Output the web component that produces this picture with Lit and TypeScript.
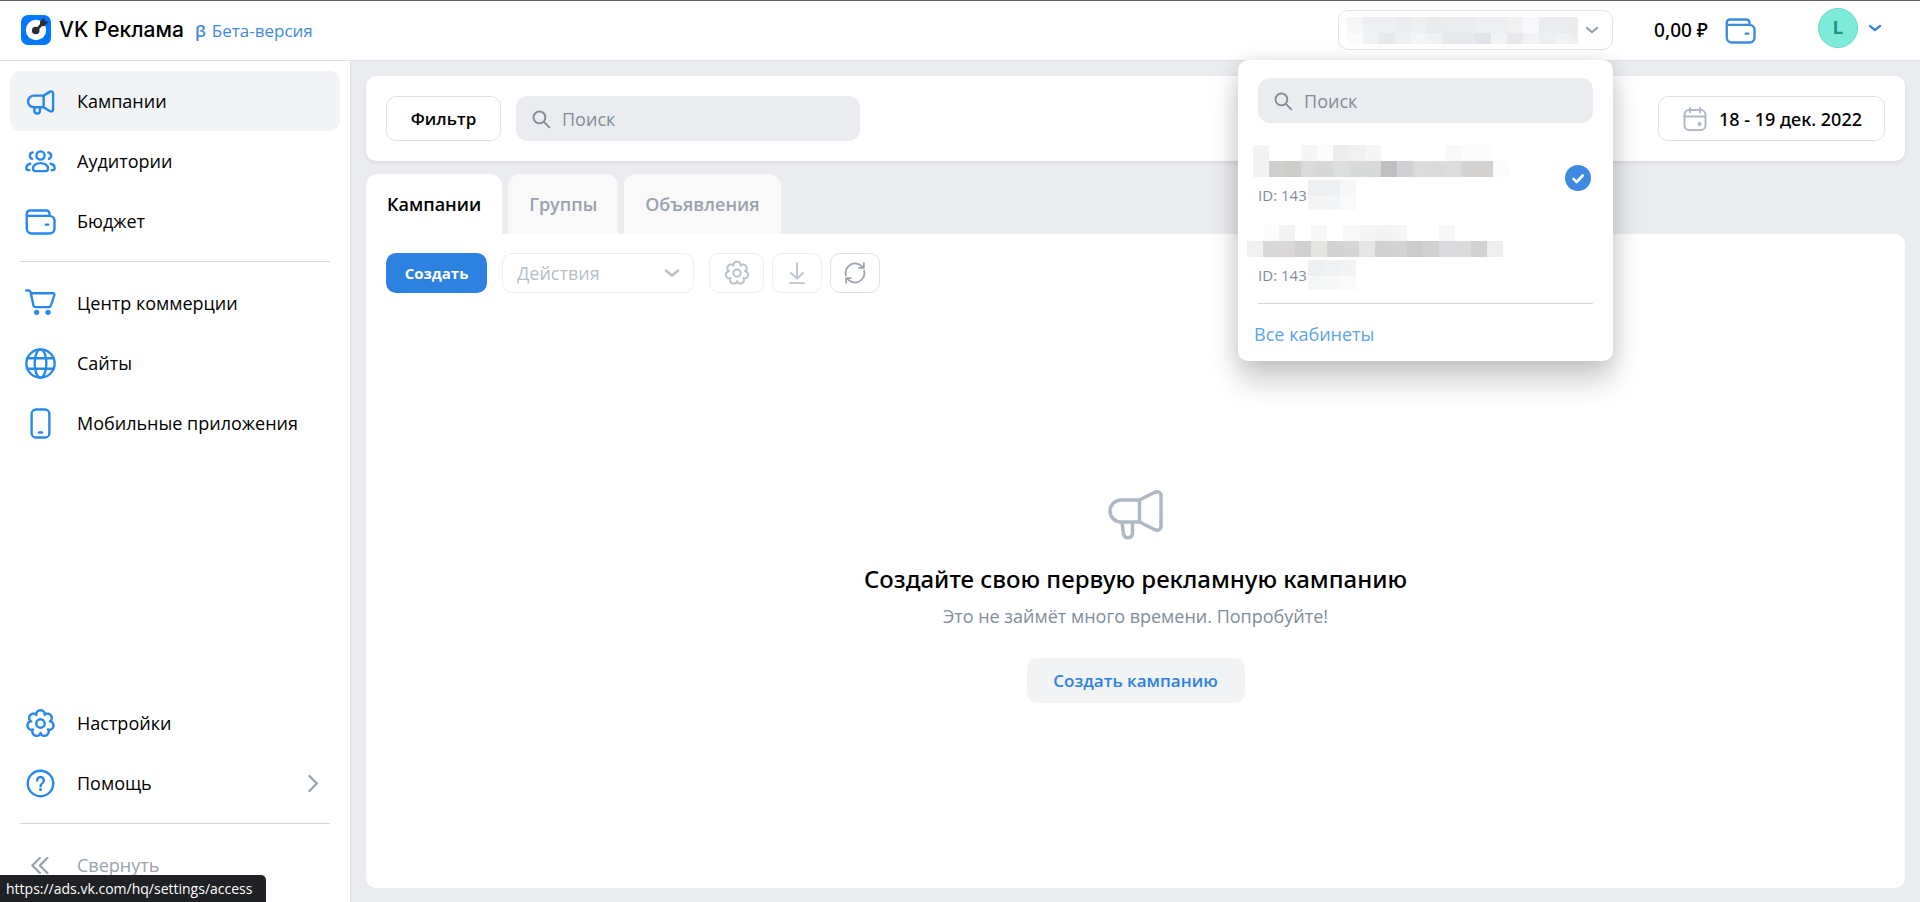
import { LitElement, html, css, svg, nothing } from "lit";
import { customElement, property } from "lit/decorators.js";
import { styleMap } from "lit/directives/style-map.js";

/** Seven-lobed gear outline centred on (14, 14). */
function gearPath(inner: number, depth: number): string {
  const steps = 140;
  const points: string[] = [];
  for (let i = 0; i < steps; i++) {
    const a = (i / steps) * Math.PI * 2;
    const r = inner + depth * Math.pow(Math.abs(Math.cos(3.5 * a)), 0.6);
    points.push(`${(14 + r * Math.sin(a)).toFixed(2)} ${(14 - r * Math.cos(a)).toFixed(2)}`);
  }
  return `M${points.join("L")}Z`;
}

const GEAR = gearPath(7.6, 3);

const ICONS: Record<string, unknown> = {
  megaphone: svg`<path d="M16.5 9.3H8.7a4.65 4.65 0 0 0 0 9.3h7.8zM16.5 9.3l5.2-3.2A1.6 1.6 0 0 1 24.1 7.5v12.9a1.6 1.6 0 0 1-2.4 1.4l-5.2-3.2M9.1 18.6v2.7a2.25 2.25 0 0 0 4.5 0v-2.7"/>`,
  users: svg`<circle cx="14" cy="9.2" r="3.3"/><path d="M8 19.6c0-2.600 2.800-4.300 6-4.300s6 1.700 6 4.300c0 1.300-.7 2.100-1.900 2.100H9.900C8.700 21.700 8 20.900 8 19.600zM7.700 6.700a2.700 2.700 0 0 0-.4 5.200M20.300 6.700a2.700 2.700 0 0 1 .4 5.200M5.900 15.800C4 16.200 2.700 17.500 2.700 19.200c0 1 .6 1.700 1.600 1.700h.8M22.100 15.800c1.900.4 3.200 1.700 3.200 3.400 0 1-.6 1.700-1.600 1.700h-.8"/>`,
  wallet: svg`<path d="M3 9.500V7.700a2.500 2.500 0 0 1 2.500-2.500h13.200a2.500 2.500 0 0 1 2.500 2.500v1.800M3 9.500h18.200a4 4 0 0 1 4 4v6.100a4 4 0 0 1-4 4H7a4 4 0 0 1-4-4zM18.200 16.500h2"/>`,
  cart: svg`<path d="M2.700 3.600h1.700a1.800 1.800 0 0 1 1.700 1.400l2.200 10.300a2 2 0 0 0 2 1.600h10.200a2 2 0 0 0 1.900-1.500l2.700-8.200a1.100 1.100 0 0 0-1.100-1.400H6.400"/><g fill="currentColor" stroke="none"><circle cx="10.900" cy="21" r="2.100"/><circle cx="20" cy="21" r="2.100"/></g>`,
  globe: svg`<circle cx="14" cy="14" r="11.300"/><ellipse cx="14" cy="14" rx="4.700" ry="11.300"/><path d="M3.500 9.800h21M3.500 18.200h21"/>`,
  phone: svg`<rect x="6.900" y="2.800" width="14.200" height="22.400" rx="3.500"/><path d="M12.800 21.200h2.400"/>`,
  gear: svg`<path d=${GEAR}/><circle cx="14" cy="14" r="3.400"/>`,
  help: svg`<circle cx="14" cy="14" r="10.200"/><path d="M11.300 11.600a2.700 2.700 0 1 1 4.300 2.100c-1 .7-1.600 1.300-1.600 2.500"/><circle cx="14" cy="18.700" r="1.200" fill="currentColor" stroke="none"/>`,
  collapse: svg`<path d="M13.500 8l-6 6 6 6M19.500 8l-6 6 6 6"/>`,
  chevronRight: svg`<path d="M11.500 8l6 6-6 6"/>`,
  chevronDown: svg`<path d="M8 11.500l6 5 6-5"/>`,
  search: svg`<circle cx="12" cy="12" r="7.500"/><path d="M17.600 17.600l7 7"/>`,
  calendar: svg`<rect x="3.500" y="5" width="21" height="20" rx="4.500"/><path d="M3.500 11.500h21M9 3v4.500M19 3v4.500"/><circle cx="18.500" cy="19" r="2" fill="currentColor" stroke="none"/>`,
  download: svg`<path d="M14 3.500v16M7.500 14l6.500 6 6.500-6M6.500 25h15"/>`,
  refresh: svg`<path d="M4.100 16.500A10.200 10.200 0 0 1 22.600 8.500M23.900 11.500A10.200 10.200 0 0 1 5.400 19.500M23.500 3.500v5h-5M4.500 24.500v-5h5"/>`,
};

@customElement("ui-icon")
export class UiIcon extends LitElement {
  static styles = css`
    :host { display: block; flex: none; width: 35px; height: 35px; }
    .icon { display: block; width: 100%; height: 100%; }
  `;
  @property() name = "";
  @property({ type: Number }) weight = 1.9;
  render() {
    return html`<svg class="icon" viewBox="0 0 28 28" fill="none" stroke="currentColor" stroke-width=${this.weight}
      stroke-linecap="round" stroke-linejoin="round" aria-hidden="true">${ICONS[this.name] ?? nothing}</svg>`;
  }
}

/** Pixelated mask in place of a private value: rows of 16px cells. */
@customElement("pixel-mask")
export class PixelMask extends LitElement {
  static styles = css`
    :host { display: block; }
    .row { display: flex; }
    .cell { width: 16px; flex: none; }
  `;
  @property({ attribute: false }) rows: string[] = [];
  @property({ attribute: false }) heights: number[] = [];
  render() {
    return this.rows.map((row, i) => html`<div class="row">${row.split(" ").map((c) => html`<span class="cell"
      style=${styleMap({ height: `${this.heights[i] ?? 16}px`, background: c === "-" ? "transparent" : `#${c}` })}></span>`)}</div>`);
  }
}

const NAV_MAIN = [
  { icon: "megaphone", label: "Кампании", active: true },
  { icon: "users", label: "Аудитории" },
  { icon: "wallet", label: "Бюджет" },
];
const NAV_ASSETS = [
  { icon: "cart", label: "Центр коммерции" },
  { icon: "globe", label: "Сайты" },
  { icon: "phone", label: "Мобильные приложения" },
];
const NAV_SERVICE = [
  { icon: "gear", label: "Настройки" },
  { icon: "help", label: "Помощь", more: true },
];

const CURRENT_MASK = [
  "f5f6f8 eeeff2 eeeff2 ecedef eeeff1 eaebed ebecee ecedf1 eeeff1 eeeff2 f1f1f1 f7f8fb ebecee ebecef eaebed",
  "fafcfb f0f1f3 e8e9eb eeeff1 f3f4f6 f0f1f3 e7e8ec e8e9ed e3e4e9 f2f3f5 e8e9ed f1f2f4 edeef0 f1f2f4 eeeff1",
];

const ACCOUNTS = [
  {
    id: "ID: 143", selected: true, lead: 0,
    name: [
      "f2f2f2 - - f6f5f3 fbfdfc ededed f0f0f0 f5f5f5 - - - - f8f8f8 fcfcfc fcfcfc -",
      "f2f2f2 cfcfcf cdcdca dadada d6d7d9 dbdedd d8dad8 d6d9d7 bfbfbf d0d1d4 dbdbdb dadada dcdcdc d4d3d2 d3d2d0 fbfbfb",
    ],
    tail: ["eeeff1 eeeff1 f6f7f9", "f5f5f6 f3f4f5 f8f9fa"],
  },
  {
    id: "ID: 143", selected: false, lead: -6,
    name: [
      "- fcfcfc f2f2f2 - f7f7f7 - f8f8f8 f5f5f5 f2f2f2 f5f5f5 - - f7f7f7 - - -",
      "f1f1f1 d6d9d8 dad7d8 d0d0d0 e4e4e1 d2d2d2 d5d5d5 e5e5e5 d1d1d1 d3d3d3 cccccc d1d1d1 dadade dadada d2d2d2 eeeeee",
    ],
    tail: ["eeeff1 f0f1f3 f2f3f5", "f6f7f9 f6f8f7 fafafa"],
  },
];

@customElement("app-root")
export class AppRoot extends LitElement {
  static styles = css`
    :host {
      display: flex; flex-direction: column; min-height: 100vh; box-sizing: border-box;
      border-top: 1px solid #5f5e66; background: #ebecf0; color: #000;
      font: 18px/24px "Open Sans", "Noto Sans", sans-serif;
    }
    * { box-sizing: border-box; }
    button, input, select { font: inherit; color: inherit; margin: 0; }
    button { display: flex; align-items: center; justify-content: center; padding: 0; border: 0; background: none; cursor: pointer; }
    a { color: inherit; text-decoration: none; }

    .header { display: flex; align-items: center; height: 60px; padding: 0 33px 1px 21px; background: #fff; border-bottom: 1px solid #dfe1e5; }
    .brand { display: flex; align-items: center; gap: 8px; font: 500 21px/24px Inter, sans-serif; }
    .logo { display: block; width: 30px; height: 30px; }
    .beta { display: flex; gap: 6px; margin: 2px 0 0 11px; font-size: 17px; color: #3f8ae0; }
    .beta-sign { font-weight: 600; }
    .account { position: relative; margin-left: auto; }
    .account-toggle { width: 275px; height: 40px; padding: 0 8px; justify-content: space-between; border: 1px solid #e1e3e6; border-radius: 10px; color: #99a2ad; }
    .current { width: 231px; overflow: hidden; }
    .small { width: 24px; height: 24px; }
    .balance { display: flex; align-items: center; gap: 15px; margin-left: 41px; font-family: "Noto Sans", sans-serif; font-size: 19px; font-weight: 500; }
    .balance ui-icon { color: #3f8ae0; }
    .profile { gap: 5px; margin: 0 0 4px 60px; color: #2d81e0; }
    .avatar { display: flex; align-items: center; justify-content: center; width: 40px; height: 40px; border: 1px solid #70d8c8; border-radius: 50%; background: #7debd9; color: #1f9484; font: 700 18px/24px Inter, sans-serif; }

    .menu { position: absolute; z-index: 2; top: 50px; right: 0; width: 375px; padding: 18px 20px 15px; background: #fff; border-radius: 10px; box-shadow: 0 20px 30px rgba(0, 0, 0, .2), 0 0 20px rgba(0, 0, 0, .1); }
    .search { display: flex; align-items: center; gap: 10px; height: 45px; padding: 0 14px; border-radius: 12px; background: #ebecf0; color: #818c99; }
    .search ui-icon { width: 22px; height: 22px; }
    .search input { flex: 1; min-width: 0; padding: 0; border: 0; outline: 0; background: none; }
    .search input::placeholder { color: #818c99; opacity: 1; }
    .accounts { margin: 22px 0 0; padding: 0; list-style: none; display: grid; gap: 15px; }
    .account-row { width: 100%; justify-content: space-between; margin-left: -5px; padding-right: 2px; text-align: left; }
    .account-id { display: flex; align-items: center; gap: 1px; height: 30px; margin: 3px 0 0 5px; font-size: 15px; line-height: 20px; color: #818c99; }
    .check { display: block; width: 26px; height: 26px; margin-right: -5px; }
    .all { display: block; margin-top: 13px; padding-top: 18px; border-top: 1px solid #d7d8d9; color: #5ba3ed; }
    .all-label { margin-left: -4px; }

    .body { display: flex; flex: 1; }
    .sidebar { display: flex; flex-direction: column; flex: none; width: 351px; padding: 10px 10px 7px; background: #fff; border-right: 1px solid #dfe1e6; }
    .nav-item { display: flex; align-items: center; gap: 19px; width: 100%; height: 60px; padding: 0 10px 0 13px; border-radius: 10px; justify-content: flex-start; }
    .nav-item.active { background: #f2f3f5; }
    .nav-item ui-icon { color: #2688eb; }
    .nav-item .more { margin-left: auto; color: #99a2ad; }
    .nav-item.muted, .nav-item.muted ui-icon { color: #99a2ad; }
    .rule { height: 1px; margin: 10px 10px 11px; border: 0; background: #d7d8d9; }
    .spacer { flex: 1; }

    .main { display: flex; flex-direction: column; flex: 1; min-width: 0; padding: 15px 15px 14px; }
    .filters { display: flex; align-items: center; gap: 15px; padding: 20px; background: #fff; border-radius: 10px; box-shadow: 0 2px 4px rgba(0, 0, 0, .07); }
    .outlined { height: 45px; border: 1px solid #dfe1e3; border-radius: 10px; font-size: 17px; font-weight: 600; }
    .filter { width: 115px; }
    .filters .search { width: 344px; }
    .date { gap: 10px; margin-left: auto; width: 227px; font-family: "Noto Sans", sans-serif; font-size: 18px; font-weight: 500; }
    .date ui-icon { width: 28px; height: 28px; color: #b0b8c4; }

    .tabs { display: flex; gap: 6px; margin-top: 13px; }
    .tab { height: 60px; padding: 0 21px; border-radius: 12px 12px 0 0; background: #f9f9fa; font-weight: 600; color: #99a2ad; }
    .tab.active { background: #fff; color: #000; }
    .panel { display: flex; flex-direction: column; flex: 1; padding: 19px 20px; background: #fff; border-radius: 0 10px 10px 10px; }
    .toolbar { display: flex; align-items: center; }
    .create { width: 101px; height: 40px; border-radius: 10px; background: #2d81e0; color: #fff; font-size: 15px; font-weight: 700; }
    .actions { position: relative; margin: 0 15px; }
    .actions select { display: block; width: 192px; height: 40px; padding: 0 40px 0 14px; appearance: none; border: 1px solid #ecedef; border-radius: 10px; background: #fff; color: #b8bec6; opacity: 1; }
    .actions ui-icon { position: absolute; top: 6px; right: 8px; width: 28px; height: 28px; color: #b8bec6; pointer-events: none; }
    .tools { display: flex; gap: 8px; }
    .tool { width: 50px; height: 40px; border: 1px solid #ecedef; border-radius: 10px; color: #bcc3cb; }
    .tool.wide { width: 55px; }
    .tool.ready { border-color: #dfe1e3; color: #99a2ad; }
    .tool ui-icon { width: 26px; height: 26px; }
    .tool.wide ui-icon { width: 30px; height: 30px; }

    .empty { display: flex; flex-direction: column; align-items: center; margin-top: 197px; }
    .empty-icon { display: block; width: 56px; height: 50px; color: #aeb7c2; }
    .empty-title { margin: 23px 0 0; font-family: "Noto Sans", sans-serif; font-size: 24px; line-height: 32px; font-weight: 500; }
    .empty-text { margin: 9px 0 0; color: #818c99; }
    .empty-action { width: 218px; height: 45px; margin-top: 30px; border-radius: 10px; background: #f2f3f5; color: #2d81e0; font-size: 17px; font-weight: 600; }

    .status { position: fixed; z-index: 3; left: 0; bottom: 0; height: 27px; padding: 2px 14px 0 6px; border-radius: 0 5px 0 0; background: #202124; color: #fff; font-size: 14px; }
  `;

  private navItem(item: { icon: string; label: string; active?: boolean; more?: boolean }) {
    return html`<a class="nav-item ${item.active ? "active" : ""}" href="#" aria-current=${item.active ? "page" : nothing}>
      <ui-icon name=${item.icon}></ui-icon><span>${item.label}</span>
      ${item.more ? html`<ui-icon class="more" name="chevronRight"></ui-icon>` : nothing}
    </a>`;
  }

  private searchBox() {
    return html`<label class="search"><ui-icon name="search" .weight=${2.4}></ui-icon><input type="text" placeholder="Поиск" aria-label="Поиск" /></label>`;
  }

  private accountMenu() {
    return html`<div class="menu">
      ${this.searchBox()}
      <ul class="accounts">
        ${ACCOUNTS.map((a) => html`<li><button class="account-row">
          <span>
            <pixel-mask .rows=${a.name} style=${styleMap({ marginLeft: `${a.lead}px` })}></pixel-mask>
            <span class="account-id">${a.id}<pixel-mask .rows=${a.tail} .heights=${[16, 14]}></pixel-mask></span>
          </span>
          ${a.selected ? html`<svg class="check" viewBox="0 0 26 26" aria-hidden="true"><circle cx="13" cy="13" r="13" fill="#3f8ae0"/><path d="M8.500 13.800l3.200 3.200 6-6.500" fill="none" stroke="#fff" stroke-width="2.600" stroke-linecap="round" stroke-linejoin="round"/></svg>` : nothing}
        </button></li>`)}
      </ul>
      <a class="all" href="#"><span class="all-label">Все кабинеты</span></a>
    </div>`;
  }

  render() {
    return html`
      <header class="header">
        <a class="brand" href="#">
          <svg class="logo" viewBox="0 0 30 30" aria-hidden="true">
            <rect width="30" height="30" rx="7" fill="#07f"/>
            <circle cx="15" cy="15" r="10.200" fill="#fff"/>
            <path d="M15 15.500L21 9" stroke="#2b2d33" stroke-width="2.600"/>
            <path d="M18.800 6.800l4.200-4 1 3.400 3.200.8-4 4.200-3.600-.2z" fill="#2b2d33"/>
            <circle cx="14.700" cy="15.500" r="3.800" fill="#2b2d33"/>
          </svg>
          VK Реклама
        </a>
        <a class="beta" href="#"><span class="beta-sign">β</span>Бета-версия</a>
        <div class="account">
          <button class="account-toggle" aria-label="Выбор кабинета" aria-expanded="true">
            <pixel-mask class="current" .rows=${CURRENT_MASK} .heights=${[16, 11]}></pixel-mask>
            <ui-icon class="small" name="chevronDown" .weight=${2.4}></ui-icon>
          </button>
          ${this.accountMenu()}
        </div>
        <a class="balance" href="#"><span>0,00 ₽</span><ui-icon name="wallet"></ui-icon></a>
        <button class="profile" aria-label="Профиль"><span class="avatar">L</span><ui-icon class="small" name="chevronDown" .weight=${2.4}></ui-icon></button>
      </header>
      <div class="body">
        <nav class="sidebar">
          ${NAV_MAIN.map((i) => this.navItem(i))}
          <hr class="rule" />
          ${NAV_ASSETS.map((i) => this.navItem(i))}
          <div class="spacer"></div>
          ${NAV_SERVICE.map((i) => this.navItem(i))}
          <hr class="rule" />
          <button class="nav-item muted"><ui-icon name="collapse"></ui-icon><span>Свернуть</span></button>
        </nav>
        <main class="main">
          <section class="filters">
            <button class="outlined filter">Фильтр</button>
            ${this.searchBox()}
            <button class="outlined date"><ui-icon name="calendar"></ui-icon>18 - 19 дек. 2022</button>
          </section>
          <div class="tabs" role="tablist">
            <button class="tab active" role="tab" aria-selected="true">Кампании</button>
            <button class="tab" role="tab" aria-selected="false">Группы</button>
            <button class="tab" role="tab" aria-selected="false">Объявления</button>
          </div>
          <section class="panel">
            <div class="toolbar">
              <button class="create">Создать</button>
              <div class="actions"><select disabled aria-label="Действия"><option>Действия</option></select><ui-icon name="chevronDown" .weight=${2.4}></ui-icon></div>
              <div class="tools">
                <button class="tool wide" disabled aria-label="Настройки"><ui-icon name="gear"></ui-icon></button>
                <button class="tool" disabled aria-label="Скачать"><ui-icon name="download"></ui-icon></button>
                <button class="tool ready" aria-label="Обновить"><ui-icon name="refresh"></ui-icon></button>
              </div>
            </div>
            <div class="empty">
              <svg class="empty-icon" viewBox="0 0 56 50" fill="none" stroke="currentColor" stroke-width="3.500" stroke-linecap="round" stroke-linejoin="round" aria-hidden="true">
                <path d="M31.500 10H13a11 11 0 0 0 0 22h18.500zM31.500 10L46.800 2.300c3-1.400 6.200.3 6.200 3.200v31c0 2.900-3.200 4.600-6.200 3.200L31.500 32M14 32l1.500 12.300a4.600 4.600 0 0 0 9-.6V32"/>
              </svg>
              <h2 class="empty-title">Создайте свою первую рекламную кампанию</h2>
              <p class="empty-text">Это не займёт много времени. Попробуйте!</p>
              <button class="empty-action">Создать кампанию</button>
            </div>
          </section>
        </main>
      </div>
      <div class="status">https://ads.vk.com/hq/settings/access</div>
    `;
  }
}
